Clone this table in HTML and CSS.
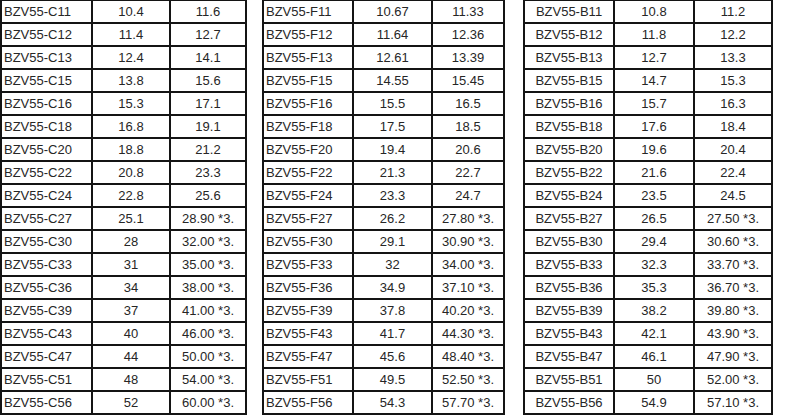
FILE: index.html
```html
<!DOCTYPE html>
<html>
<head>
<meta charset="utf-8">
<link rel="stylesheet" href="styles.css">
</head>
<body>
<div class="sheet">
  <div class="grid grid-c">
    <div class="cell name">BZV55-C11</div><div class="cell">10.4</div><div class="cell">11.6</div>
    <div class="cell name">BZV55-C12</div><div class="cell">11.4</div><div class="cell">12.7</div>
    <div class="cell name">BZV55-C13</div><div class="cell">12.4</div><div class="cell">14.1</div>
    <div class="cell name">BZV55-C15</div><div class="cell">13.8</div><div class="cell">15.6</div>
    <div class="cell name">BZV55-C16</div><div class="cell">15.3</div><div class="cell">17.1</div>
    <div class="cell name">BZV55-C18</div><div class="cell">16.8</div><div class="cell">19.1</div>
    <div class="cell name">BZV55-C20</div><div class="cell">18.8</div><div class="cell">21.2</div>
    <div class="cell name">BZV55-C22</div><div class="cell">20.8</div><div class="cell">23.3</div>
    <div class="cell name">BZV55-C24</div><div class="cell">22.8</div><div class="cell">25.6</div>
    <div class="cell name">BZV55-C27</div><div class="cell">25.1</div><div class="cell">28.90 *3.</div>
    <div class="cell name">BZV55-C30</div><div class="cell">28</div><div class="cell">32.00 *3.</div>
    <div class="cell name">BZV55-C33</div><div class="cell">31</div><div class="cell">35.00 *3.</div>
    <div class="cell name">BZV55-C36</div><div class="cell">34</div><div class="cell">38.00 *3.</div>
    <div class="cell name">BZV55-C39</div><div class="cell">37</div><div class="cell">41.00 *3.</div>
    <div class="cell name">BZV55-C43</div><div class="cell">40</div><div class="cell">46.00 *3.</div>
    <div class="cell name">BZV55-C47</div><div class="cell">44</div><div class="cell">50.00 *3.</div>
    <div class="cell name">BZV55-C51</div><div class="cell">48</div><div class="cell">54.00 *3.</div>
    <div class="cell name">BZV55-C56</div><div class="cell">52</div><div class="cell">60.00 *3.</div>
    <div class="cell"></div><div class="cell"></div><div class="cell"></div>
  </div>
  <div class="grid grid-f">
    <div class="cell name">BZV55-F11</div><div class="cell">10.67</div><div class="cell">11.33</div>
    <div class="cell name">BZV55-F12</div><div class="cell">11.64</div><div class="cell">12.36</div>
    <div class="cell name">BZV55-F13</div><div class="cell">12.61</div><div class="cell">13.39</div>
    <div class="cell name">BZV55-F15</div><div class="cell">14.55</div><div class="cell">15.45</div>
    <div class="cell name">BZV55-F16</div><div class="cell">15.5</div><div class="cell">16.5</div>
    <div class="cell name">BZV55-F18</div><div class="cell">17.5</div><div class="cell">18.5</div>
    <div class="cell name">BZV55-F20</div><div class="cell">19.4</div><div class="cell">20.6</div>
    <div class="cell name">BZV55-F22</div><div class="cell">21.3</div><div class="cell">22.7</div>
    <div class="cell name">BZV55-F24</div><div class="cell">23.3</div><div class="cell">24.7</div>
    <div class="cell name">BZV55-F27</div><div class="cell">26.2</div><div class="cell">27.80 *3.</div>
    <div class="cell name">BZV55-F30</div><div class="cell">29.1</div><div class="cell">30.90 *3.</div>
    <div class="cell name">BZV55-F33</div><div class="cell">32</div><div class="cell">34.00 *3.</div>
    <div class="cell name">BZV55-F36</div><div class="cell">34.9</div><div class="cell">37.10 *3.</div>
    <div class="cell name">BZV55-F39</div><div class="cell">37.8</div><div class="cell">40.20 *3.</div>
    <div class="cell name">BZV55-F43</div><div class="cell">41.7</div><div class="cell">44.30 *3.</div>
    <div class="cell name">BZV55-F47</div><div class="cell">45.6</div><div class="cell">48.40 *3.</div>
    <div class="cell name">BZV55-F51</div><div class="cell">49.5</div><div class="cell">52.50 *3.</div>
    <div class="cell name">BZV55-F56</div><div class="cell">54.3</div><div class="cell">57.70 *3.</div>
    <div class="cell"></div><div class="cell"></div><div class="cell"></div>
  </div>
  <div class="grid grid-b">
    <div class="cell name">BZV55-B11</div><div class="cell">10.8</div><div class="cell">11.2</div>
    <div class="cell name">BZV55-B12</div><div class="cell">11.8</div><div class="cell">12.2</div>
    <div class="cell name">BZV55-B13</div><div class="cell">12.7</div><div class="cell">13.3</div>
    <div class="cell name">BZV55-B15</div><div class="cell">14.7</div><div class="cell">15.3</div>
    <div class="cell name">BZV55-B16</div><div class="cell">15.7</div><div class="cell">16.3</div>
    <div class="cell name">BZV55-B18</div><div class="cell">17.6</div><div class="cell">18.4</div>
    <div class="cell name">BZV55-B20</div><div class="cell">19.6</div><div class="cell">20.4</div>
    <div class="cell name">BZV55-B22</div><div class="cell">21.6</div><div class="cell">22.4</div>
    <div class="cell name">BZV55-B24</div><div class="cell">23.5</div><div class="cell">24.5</div>
    <div class="cell name">BZV55-B27</div><div class="cell">26.5</div><div class="cell">27.50 *3.</div>
    <div class="cell name">BZV55-B30</div><div class="cell">29.4</div><div class="cell">30.60 *3.</div>
    <div class="cell name">BZV55-B33</div><div class="cell">32.3</div><div class="cell">33.70 *3.</div>
    <div class="cell name">BZV55-B36</div><div class="cell">35.3</div><div class="cell">36.70 *3.</div>
    <div class="cell name">BZV55-B39</div><div class="cell">38.2</div><div class="cell">39.80 *3.</div>
    <div class="cell name">BZV55-B43</div><div class="cell">42.1</div><div class="cell">43.90 *3.</div>
    <div class="cell name">BZV55-B47</div><div class="cell">46.1</div><div class="cell">47.90 *3.</div>
    <div class="cell name">BZV55-B51</div><div class="cell">50</div><div class="cell">52.00 *3.</div>
    <div class="cell name">BZV55-B56</div><div class="cell">54.9</div><div class="cell">57.10 *3.</div>
    <div class="cell"></div><div class="cell"></div><div class="cell"></div>
  </div>
</div>
</body>
</html>
```

FILE: styles.css
```css
html, body {
  margin: 0;
  padding: 0;
  background: #ffffff;
  overflow: hidden;
}

.sheet {
  display: flex;
  align-items: flex-start;
  margin-top: -1px;
  font-family: "Liberation Sans", Arial, sans-serif;
  font-size: 13px;
  color: #262626;
}

.grid {
  display: grid;
  grid-auto-rows: 21px;
  gap: 2px;
  padding: 2px;
  background: #141414;
}

.grid-c {
  grid-template-columns: 89px 76px 74px;
  margin-right: 15px;
}

.grid-f {
  grid-template-columns: 88px 77px 70px;
  margin-right: 18px;
}

.grid-b {
  grid-template-columns: 88px 78px 76px;
}

.cell {
  background: #ffffff;
  line-height: 21px;
  text-align: center;
  white-space: nowrap;
  overflow: hidden;
}

.name {
  text-align: left;
  padding-left: 2px;
}

.grid-b .name {
  text-align: center;
  padding-left: 0;
}
```
